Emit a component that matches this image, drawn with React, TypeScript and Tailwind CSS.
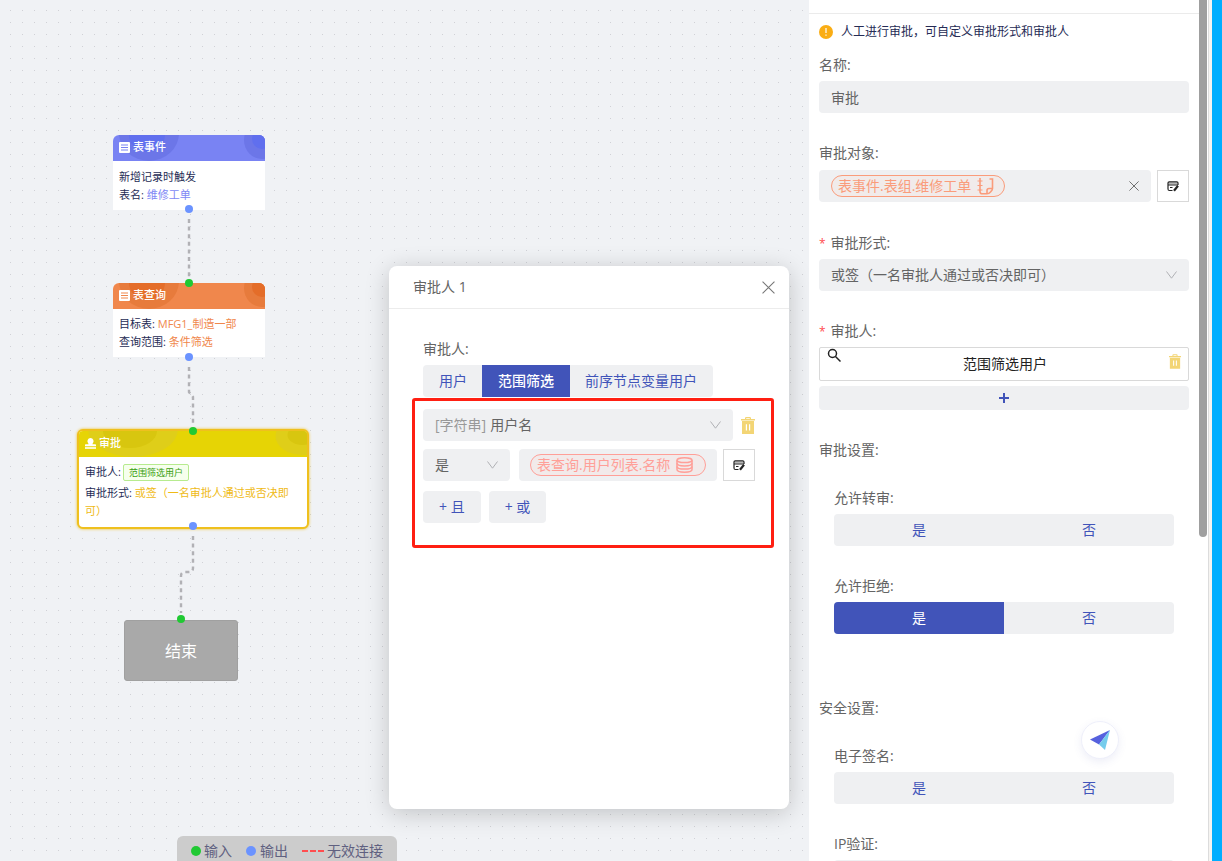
import { useState } from "react";
import type { ReactNode } from "react";

type NodeHeaderProps = {
  title: string;
  icon: ReactNode;
  bg: string;
  outer: string;
  inner: string;
};

type SegmentedProps = {
  name: string;
  label: string;
  initial?: string;
};

const edges = ["M189 219V277", "M189 367V392L193 397V425", "M193 536V568Q193 572 189 572H185Q181 572 181 576V613"];

const ports = [
  { x: 189, y: 209, color: "#6b93ff" },
  { x: 189, y: 283, color: "#20c933" },
  { x: 189, y: 357, color: "#6b93ff" },
  { x: 193, y: 431, color: "#20c933" },
  { x: 193, y: 526, color: "#6b93ff" },
  { x: 181, y: 619, color: "#20c933" },
];

function TableIcon({ line }: { line: string }) {
  return (
    <svg className="size-[11px]" viewBox="0 0 11 11" aria-hidden="true">
      <rect width="11" height="11" rx="1" fill="#fff" />
      <path d="M2 3h7M2 5.500h7M2 8h7" stroke={line} strokeWidth="1" />
    </svg>
  );
}

function StampIcon() {
  return (
    <svg className="size-[11px]" viewBox="0 0 11 11" fill="#fff" aria-hidden="true">
      <path d="M5.500 0a3.200 3.200 0 0 1 2.200 5.400c-.5.600-.4.900.5.900h2.100q.7 0 .7.700v1.200H0V7q0-.7.700-.7h2.100c.900 0 1-.3.500-.9A3.200 3.200 0 0 1 5.500 0Z" />
      <rect y="9.200" width="11" height="1.600" />
    </svg>
  );
}

function ChevronIcon() {
  return (
    <svg className="pointer-events-none h-[8px] w-[11px] shrink-0" viewBox="0 0 11 8" fill="none" stroke="#b0b1b5" aria-hidden="true">
      <path d="M0.500 0.500 5.500 7.200 10.500 0.500" />
    </svg>
  );
}

function CloseIcon({ className }: { className: string }) {
  return (
    <svg className={className} viewBox="0 0 12 12" fill="none" stroke="currentColor" aria-hidden="true">
      <path d="M0.500 0.500 11.500 11.500M11.500 0.500 0.500 11.500" />
    </svg>
  );
}

function TrashIcon({ className }: { className: string }) {
  return (
    <svg className={className} viewBox="0 0 14 17" fill="#f3d575" aria-hidden="true">
      <path d="M4 2V1.200Q4 0 5.200 0h3.600Q10 0 10 1.200V2h4v1.500H0V2ZM5.200 2h3.600V1.200H5.200Z" fillRule="evenodd" />
      <path d="M1 4h12V17H1ZM4.800 7.200v6.300H6V7.200Zm3.200 0v6.300h1.200V7.200Z" fillRule="evenodd" />
    </svg>
  );
}

function FormEditIcon() {
  return (
    <svg className="h-[11px] w-[12px]" viewBox="0 0 12 11" fill="none" stroke="#222" aria-hidden="true">
      <path d="M1.500 1.500h9v2h-9Z" fill="#b5b5b5" stroke="none" />
      <path d="M5.500 9.500H2.500Q1 9.500 1 8V2Q1 .8 2.200 .8h7.600Q11 .8 11 2v2" strokeWidth="1.200" />
      <path d="M1 4h10M3 6.500h2.500" />
      <path d="M7 9.700 11 4.800" strokeWidth="2.200" />
    </svg>
  );
}

function NotebookIcon() {
  return (
    <svg className="h-[17px] w-[17px]" viewBox="0 0 17 17" fill="none" stroke="#fa9c7b" strokeWidth="1.600" aria-hidden="true">
      <path d="M3 0V13.500Q3 15.800 5.200 15.800H10Q12 15.800 13.500 14Q15.500 12 15.500 10.500V1H12.500" />
      <path d="M10 15.500V12.500Q10 10.500 12 10.500H15.500" />
      <path d="M0.500 3h5M0.500 7.500h5M0.500 12h5" strokeWidth="1.200" />
    </svg>
  );
}

function DatabaseIcon() {
  return (
    <svg className="h-[16px] w-[17px]" viewBox="0 0 17 16" fill="none" stroke="#ff9f98" strokeWidth="1.500" aria-hidden="true">
      <ellipse cx="8.500" cy="3.200" rx="7.500" ry="2.400" />
      <path d="M1 3.200v9.300c0 3.500 15 3.500 15 0V3.200" />
      <path d="M1 6.300c0 3.500 15 3.500 15 0M1 9.400c0 3.500 15 3.500 15 0" />
    </svg>
  );
}

function NodeHeader({ title, icon, bg, outer, inner }: NodeHeaderProps) {
  return (
    <div className={`relative flex h-[26px] items-center gap-[3px] overflow-hidden px-[6px] pb-[2px] text-[11px] font-medium text-white ${bg}`}>
      <svg className="absolute inset-0 h-full w-full" viewBox="0 0 152 26" preserveAspectRatio="none" aria-hidden="true">
        <ellipse cx="36" cy="-2" rx="30" ry="28" fill={outer} />
        <ellipse cx="34" cy="0" rx="18" ry="17" fill={inner} />
        <ellipse cx="149" cy="5" rx="18" ry="19" fill={outer} />
        <ellipse cx="149" cy="4" rx="10" ry="10" fill={inner} />
      </svg>
      <span className="relative">{icon}</span>
      <span className="relative">{title}</span>
    </div>
  );
}

function FlowCanvas() {
  return (
    <>
      <section className="absolute top-[135px] left-[113px] w-[152px] overflow-hidden rounded-t-md bg-white text-[11px] leading-[18px] text-[#262c55]">
        <NodeHeader title="表事件" icon={<TableIcon line="#7983f3" />} bg="bg-[#7983f3]" outer="#6c76e8" inner="#606fee" />
        <div className="px-[6px] pt-[7px] pb-[6px]">
          <p>新增记录时触发</p>
          <p>表名: <span className="text-[#8088f5]">维修工单</span></p>
        </div>
      </section>

      <section className="absolute top-[283px] left-[113px] w-[152px] overflow-hidden rounded-t-md bg-white text-[11px] leading-[18px] text-[#262c55]">
        <NodeHeader title="表查询" icon={<TableIcon line="#f0874c" />} bg="bg-[#f0874c]" outer="#e77b3c" inner="#e46d29" />
        <div className="px-[6px] pt-[6px] pb-[6px]">
          <p>目标表: <span className="text-[#f0874c]">MFG1_制造一部</span></p>
          <p>查询范围: <span className="text-[#f0874c]">条件筛选</span></p>
        </div>
      </section>

      <section className="absolute top-[429px] left-[77px] w-[232px] overflow-hidden rounded-md border-2 border-[#efc01e] bg-white text-[11px] leading-[18px] text-[#262c55] shadow-[0_0_3px_#efc01e]">
        <NodeHeader title="审批" icon={<StampIcon />} bg="bg-[#e6d405]" outer="#dfce19" inner="#d8c60f" />
        <div className="px-[6px] pt-[6px] pb-[7px]">
          <p className="flex items-center gap-[2px] pb-[3px]">
            审批人:
            <span className="rounded-xs border border-[#b7eb8f] bg-[#f6ffed] px-[5px] text-[9px] leading-[15px] text-[#389e0d]">范围筛选用户</span>
          </p>
          <p>审批形式: <span className="text-[#efba16]">或签（一名审批人通过或否决即可）</span></p>
        </div>
      </section>

      <section className="absolute top-[620px] left-[124px] flex h-[61px] w-[114px] items-center justify-center rounded-[3px] border border-[#a0a0a0] bg-[#a9a9a9] text-base text-white">
        结束
      </section>

      <svg className="absolute top-0 left-0 h-[861px] w-[400px]" viewBox="0 0 400 861" aria-hidden="true">
        {edges.map((d) => (
          <path key={d} d={d} fill="none" stroke="#b1b1b5" strokeWidth="2.400" strokeDasharray="4 3.600" />
        ))}
        {ports.map((port) => (
          <circle key={port.y} cx={port.x} cy={port.y} r="4" fill={port.color} />
        ))}
      </svg>

      <div className="absolute -bottom-1 left-[177px] flex h-[29px] items-center rounded-t-md bg-[#cccccc] px-[14px] text-sm text-[#5f6080]">
        <span className="mr-[3px] size-[10px] rounded-full bg-[#20c933]" />
        输入
        <span className="mr-1 ml-[14px] size-[10px] rounded-full bg-[#6b93ff]" />
        输出
        <svg className="mr-[3px] ml-[14px] h-[2px] w-[22px]" viewBox="0 0 22 2" aria-hidden="true">
          <path d="M0 1h22" stroke="#ff4d4f" strokeWidth="2" strokeDasharray="6 2" />
        </svg>
        无效连接
      </div>
    </>
  );
}

function ApproverDialog() {
  const [mode, setMode] = useState("范围筛选");
  const modes = ["用户", "范围筛选", "前序节点变量用户"];

  return (
    <div role="dialog" aria-labelledby="dialog-title" className="absolute top-[266px] left-[389px] h-[543px] w-[400px] rounded-lg bg-white text-sm text-[#646464] shadow-[0_4px_24px_rgba(0,0,0,0.2)]">
      <header className="flex h-[43px] items-center justify-between border-b border-[#ececec] pr-[14px] pl-6">
        <h2 id="dialog-title">审批人 1</h2>
        <button type="button" aria-label="关闭" className="text-[#777]">
          <CloseIcon className="size-[13px]" />
        </button>
      </header>

      <div className="pt-6 pr-[15px] pl-[23px]">
        <fieldset className="pl-[11px]">
          <legend className="leading-8">审批人:</legend>
          <div className="flex w-fit overflow-hidden rounded-sm bg-[#eff0f2]">
            {modes.map((item) => (
              <label key={item} className="flex h-8 items-center px-4 whitespace-nowrap text-[#4154b9] not-first:-ml-px has-checked:bg-[#4154b9] has-checked:font-medium has-checked:text-white">
                <input type="radio" name="mode" className="sr-only" checked={mode === item} onChange={() => setMode(item)} />
                {item}
              </label>
            ))}
          </div>
        </fieldset>

        <div className="mt-px flex flex-col gap-2 rounded-[3px] border-3 border-[#ff1f12] pt-2 pr-4 pb-[22px] pl-2">
          <div className="flex items-center gap-2">
            <label className="flex h-8 flex-1 items-center gap-1 rounded-sm bg-[#eff0f2] px-3">
              <span className="text-[#999]">[字符串]</span>
              <select aria-label="字段" className="flex-1 appearance-none bg-transparent">
                <option>用户名</option>
              </select>
              <ChevronIcon />
            </label>
            <button type="button" aria-label="删除条件">
              <TrashIcon className="h-[17px] w-[14px]" />
            </button>
          </div>

          <div className="flex items-center">
            <label className="mr-[9px] flex h-8 w-[87px] items-center rounded-sm bg-[#eff0f2] px-3">
              <select aria-label="运算符" className="w-10 flex-1 appearance-none bg-transparent">
                <option>是</option>
              </select>
              <ChevronIcon />
            </label>
            <div className="mr-[6px] flex h-8 flex-1 items-center rounded-sm bg-[#eff0f2] pl-[11px]">
              <span className="flex h-[22px] items-center gap-[6px] rounded-full border border-[#ff9f98] bg-[#f2eaea] pr-3 pl-[6px] whitespace-nowrap text-[#ff9f98]">
                表查询.用户列表.名称
                <DatabaseIcon />
              </span>
            </div>
            <button type="button" aria-label="选择变量" className="flex size-8 items-center justify-center border border-[#d9d9d9] bg-white">
              <FormEditIcon />
            </button>
          </div>

          <div className="flex gap-2 pt-[2px] text-[#4154b9]">
            <button type="button" className="h-8 rounded-sm bg-[#eff0f2] px-4">+ 且</button>
            <button type="button" className="h-8 rounded-sm bg-[#eff0f2] px-4">+ 或</button>
          </div>
        </div>
      </div>
    </div>
  );
}

function Segmented({ name, label, initial }: SegmentedProps) {
  const [value, setValue] = useState(initial);

  return (
    <fieldset className="mb-6 px-[15px]">
      <legend className="leading-8">{label}:</legend>
      <div className="grid grid-cols-2 overflow-hidden rounded-sm bg-[#eff0f2]">
        {["是", "否"].map((item) => (
          <label key={item} className="flex h-8 items-center justify-center text-[#4154b9] has-checked:bg-[#4154b9] has-checked:text-white">
            <input type="radio" name={name} className="sr-only" checked={value === item} onChange={() => setValue(item)} />
            {item}
          </label>
        ))}
      </div>
    </fieldset>
  );
}

function Required() {
  return <span className="mr-[5px] text-xs text-[#ff4d4f]">*</span>;
}

function SettingsPanel() {
  return (
    <aside className="flex w-[403px] shrink-0 overflow-hidden bg-white text-sm text-[#646464]">
      <div className="min-w-0 flex-1">
        <div className="h-[14px] border-b border-[#ebebeb]" />
        <div className="px-[10px]">
          <p className="flex h-[35px] items-center gap-2 text-xs text-[#262c55]">
            <svg className="size-[14px]" viewBox="0 0 14 14" aria-hidden="true">
              <circle cx="7" cy="7" r="7" fill="#faad14" />
              <path d="M7 3v5M7 9.500v1.300" stroke="#fff" strokeWidth="1.200" />
            </svg>
            人工进行审批，可自定义审批形式和审批人
          </p>

          <label htmlFor="node-name" className="block leading-8">名称:</label>
          <input id="node-name" defaultValue="审批" className="mb-6 block h-8 w-full rounded-sm bg-[#eff0f2] px-3" />

          <p className="leading-8">审批对象:</p>
          <div className="mb-6 flex h-[34px] items-center gap-[6px]">
            <div className="flex h-8 flex-1 items-center justify-between rounded-sm bg-[#eff0f2] px-3">
              <span className="flex h-[22px] items-center gap-[6px] rounded-full border border-[#fa9c7b] bg-[#f1ebea] pr-[10px] pl-[6px] whitespace-nowrap text-[#fa9c7b]">
                表事件.表组.维修工单
                <NotebookIcon />
              </span>
              <button type="button" aria-label="清除" className="text-[#555]">
                <CloseIcon className="size-[10px]" />
              </button>
            </div>
            <button type="button" aria-label="选择审批对象" className="flex size-8 items-center justify-center border border-[#d9d9d9] bg-white">
              <FormEditIcon />
            </button>
          </div>

          <label htmlFor="approve-type" className="block leading-8"><Required />审批形式:</label>
          <div className="mb-6 flex h-8 items-center rounded-sm bg-[#eff0f2] px-3">
            <select id="approve-type" className="flex-1 appearance-none bg-transparent">
              <option>或签（一名审批人通过或否决即可）</option>
            </select>
            <ChevronIcon />
          </div>

          <p className="leading-8"><Required />审批人:</p>
          <div className="flex h-[34px] items-start justify-between rounded-xs border border-[#d9d9d9] px-[7px] text-[#222]">
            <button type="button" aria-label="查看">
              <svg className="size-[14px]" viewBox="0 0 14 14" fill="none" stroke="#222" strokeWidth="1.500" aria-hidden="true">
                <circle cx="5.500" cy="5.500" r="4" />
                <path d="m8.500 8.500 5 5" />
              </svg>
            </button>
            <span className="self-center">范围筛选用户</span>
            <button type="button" aria-label="删除审批人" className="pt-[6px]">
              <TrashIcon className="h-[15px] w-[12px]" />
            </button>
          </div>
          <button type="button" aria-label="添加审批人" className="mt-[5px] mb-6 flex h-6 w-full items-center justify-center rounded-sm bg-[#eff0f2]">
            <svg className="size-[10px]" viewBox="0 0 10 10" stroke="#4154b9" strokeWidth="2" aria-hidden="true">
              <path d="M5 0v10M0 5h10" />
            </svg>
          </button>

          <h3 className="mb-4 leading-8">审批设置:</h3>
          <Segmented name="transfer" label="允许转审" />
          <Segmented name="reject" label="允许拒绝" initial="是" />

          <h3 className="mt-[58px] mb-4 leading-8">安全设置:</h3>
          <Segmented name="signature" label="电子签名" />
          <Segmented name="ip" label="IP验证" />
        </div>
      </div>
      <div className="w-[10px] border-r border-[#dcdcdc]">
        <div className="h-[537px] w-2 rounded-b-full bg-[#9f9f9f]" />
      </div>
      <div className="w-[3px] bg-[#f6f4f1]" />
    </aside>
  );
}

export default function App() {
  return (
    <div className="flex h-screen overflow-hidden font-['Open_Sans','Noto_Sans_CJK_SC',sans-serif]">
      <main className="relative min-w-0 flex-1 overflow-hidden bg-[#f0f2f5] bg-[linear-gradient(#f0f2f5_11px,transparent_11px),linear-gradient(90deg,#f0f2f5_11px,#d0d1d6_11px)] bg-size-[12px_12px] bg-position-[-1px_-1px]">
        <FlowCanvas />
        <ApproverDialog />
      </main>
      <SettingsPanel />
      <div className="w-[10px] shrink-0 bg-[#00aeff]" />
      <button type="button" aria-label="发送" className="fixed right-[103px] bottom-[102px] flex size-[38px] items-center justify-center rounded-full border border-[#eeeffa] bg-white shadow-[0_3px_8px_rgba(80,90,180,0.1)]">
        <svg className="size-5" viewBox="0 0 20 20" aria-hidden="true">
          <path d="M20 0 0 9.500 9 14.500Z" fill="#5661de" />
          <path d="M20 0 9 14.500 15 20Z" fill="#75ccec" />
        </svg>
      </button>
    </div>
  );
}
